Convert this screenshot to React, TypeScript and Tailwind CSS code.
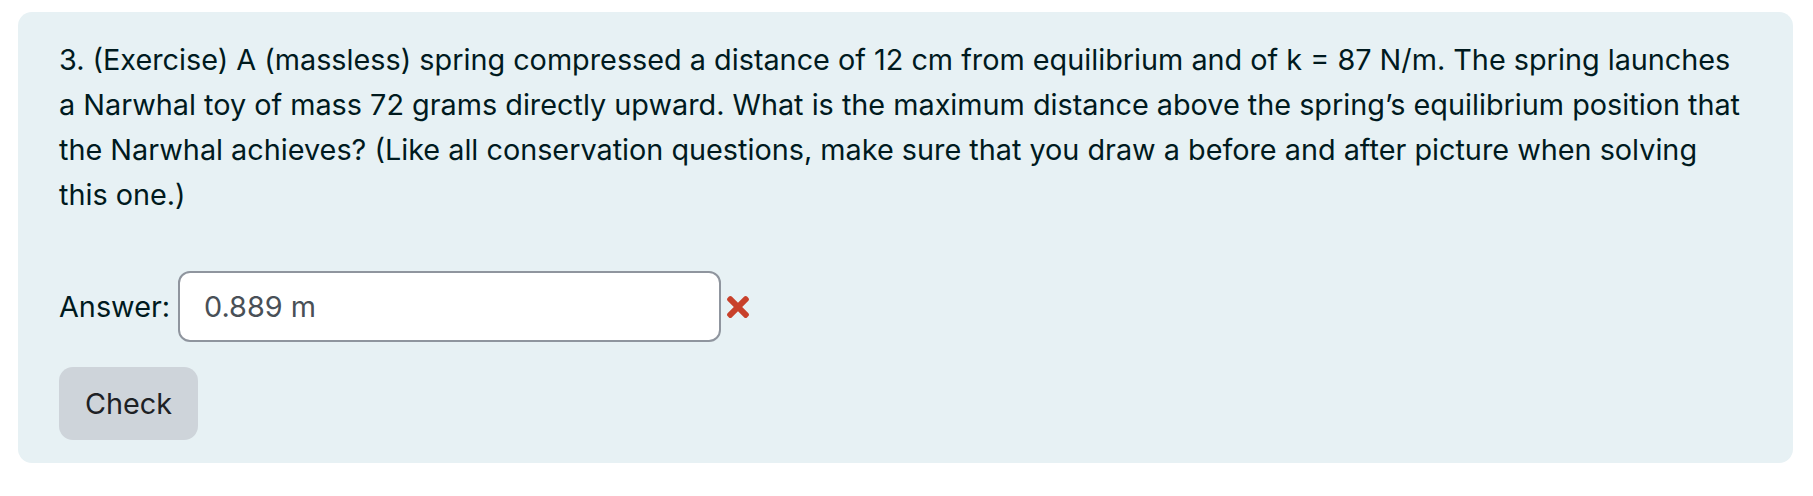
import React from "react";
import { FaTimes } from "react-icons/fa";

export default function App() {
  return (
    <div className="w-[1813px] h-[496px] bg-white pt-[12px] pl-[18px]" style={{ fontFamily: "Inter, 'Noto Sans', sans-serif" }}>
      <div className="w-[1775px] rounded-[14px] bg-[#e7f1f4] pt-[25px] pl-[41px] pb-[23px] text-[#001a1e]">
        <p className="text-[28.8px] leading-[45px] whitespace-nowrap">
          3. (Exercise) A (massless) spring compressed a distance of 12 cm from equilibrium and of k = 87 N/m. The spring launches
          <br />
          a Narwhal toy of mass 72 grams directly upward. What is the maximum distance above the spring’s equilibrium position that
          <br />
          the Narwhal achieves? (Like all conservation questions, make sure that you draw a before and after picture when solving
          <br />
          this one.)
        </p>
        <div className="mt-[54px] flex items-center">
          <label className="w-[119px] text-[28.8px] leading-[45px]">Answer:</label>
          <div className="w-[543px] h-[71px] rounded-[12px] border-2 border-[#8f959e] bg-white flex items-center pl-[24px] text-[28.8px] text-[#495057]">
            0.889 m
          </div>
          <FaTimes className="ml-[6px] w-[22px] h-[32px] text-[#c8402a]" />
        </div>
        <button className="mt-[25px] w-[139px] h-[73px] rounded-[14px] bg-[#ced4da] text-[28.8px] text-[#1d2125]">
          Check
        </button>
      </div>
    </div>
  );
}
